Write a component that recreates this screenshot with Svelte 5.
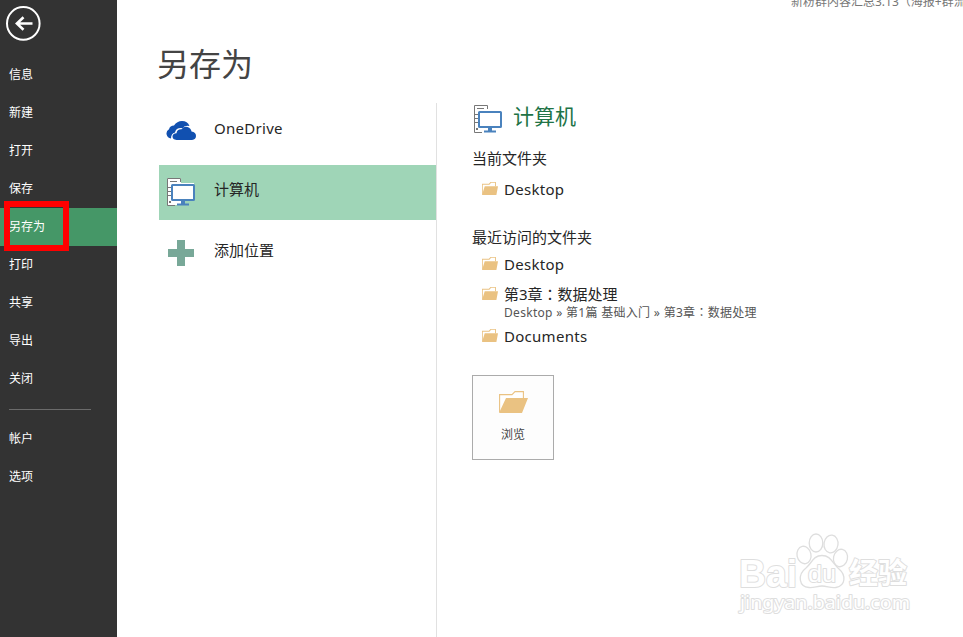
<script>
  const mainNav = ['信息', '新建', '打开', '保存', '另存为', '打印', '共享', '导出', '关闭'];
  const footNav = ['帐户', '选项'];
  const active = '另存为';
  const recent = [
    { name: 'Desktop' },
    { name: '第3章：数据处理', path: 'Desktop » 第1篇 基础入门 » 第3章：数据处理' },
    { name: 'Documents' }
  ];
</script>

{#snippet computer()}
  <svg class="pc" width="30" height="30" viewBox="0 0 30 30" fill="none">
    <path d="M1 1h14v27H1z" fill="#fff" />
    <path d="M14.5 5V1.5H1.5V28.5H9M4 4.5h7M2 10.5h3M2 14.5h3M2 18.5h3" stroke="#777" />
    <path d="M3 24h2v2H3z" fill="#777" />
    <path d="M5 6h23v18H5z" fill="#fff" />
    <rect x="6" y="8" width="22" height="15" rx=".5" fill="#fff" stroke="#4a82bd" stroke-width="2" />
    <path d="M15 24h4v2.500h4v2H11v-2h4z" fill="#4a82bd" />
  </svg>
{/snippet}

{#snippet folder(w, h)}
  <svg class="folder" width={w} height={h} viewBox="0 0 29 22" preserveAspectRatio="none">
    <path d="M.6 21V3.6H13l3-3H24.4V7" fill="#fff" stroke="#eac282" stroke-width={w < 20 ? 1.7 : 1.1} />
    <path d={w < 20 ? 'M5 7h24l-3 15H0z' : 'M7 7h22l-6 15H0z'} fill="#eac282" />
  </svg>
{/snippet}

{#snippet label(text)}
  {#each text.split('：') as part, i}{#if i}<span class="colon">：</span>{/if}{part}{/each}
{/snippet}

<div class="app">
  <aside>
    <button class="back" aria-label="返回">
      <svg width="36" height="36" viewBox="0 0 36 36" fill="none" stroke="#fff">
        <circle cx="18.300" cy="18.400" r="16.300" stroke-width="2" />
        <path d="M27.500 18.500H11.500M18.500 12.200 11.900 18.500l6.600 6.300" stroke-width="2.600" />
      </svg>
    </button>
    <nav>
      {#each mainNav as item}
        <div class="item" class:active={item === active}>
          {item}
          {#if item === active}<span class="mark"></span>{/if}
        </div>
      {/each}
      <hr />
      {#each footNav as item}
        <div class="item">{item}</div>
      {/each}
    </nav>
  </aside>

  <main>
    <div class="doc-title">新粉群内容汇总3.13（海报+群流</div>
    <h1>另存为</h1>
    <div class="columns">
      <section class="places">
        <div class="place">
          <svg width="30" height="19" viewBox="0 0 30 19">
            <path d="M5 17.5A5 5 0 0 1 3 8.200Q4 4.500 8 4.500Q11 0 16 0Q21.500 0 23.500 5Q19 4 16.500 7.200Q10 6.500 9 11.500Q5 12.500 5 17.500Z" fill="#1150b0" />
            <path d="M10.500 19Q6.500 18.500 6.500 15.500Q6.500 12.500 10.500 12.300Q11 8 15.500 8.200Q18 4.900 21.500 6Q25 7 25.500 10.500Q30 11 30 15Q30 18.500 26 19Z" fill="#1150b0" />
          </svg>
          <span class="en">OneDrive</span>
        </div>
        <div class="place selected">
          {@render computer()}
          <span>计算机</span>
        </div>
        <div class="place add">
          <svg width="26" height="26" viewBox="0 0 26 26"><path d="M9 0h8v9h9v8h-9v9H9v-9H0V9h9z" fill="#78a898" /></svg>
          <span>添加位置</span>
        </div>
      </section>

      <section class="details">
        <h2>{@render computer()}<span>计算机</span></h2>
        <h3>当前文件夹</h3>
        <div class="row">{@render folder(16, 13)}<div class="name en">Desktop</div></div>
        <h3 class="second">最近访问的文件夹</h3>
        {#each recent as r}
          <div class="row" class:deep={r.path}>
            {@render folder(16, 13)}
            <div class="name" class:en={!r.path}>
              {@render label(r.name)}
              {#if r.path}<small>{@render label(r.path)}</small>{/if}
            </div>
          </div>
        {/each}
        <button class="browse">{@render folder(29, 22)}<span>浏览</span></button>
      </section>
    </div>
  </main>

  <svg class="watermark" width="190" height="100" viewBox="0 0 190 100">
    <g fill="#fff" stroke="#dedede" stroke-width="1.300">
      <ellipse cx="74" cy="30" rx="7" ry="8.800" transform="rotate(-12 74 30)" />
      <ellipse cx="86" cy="18" rx="6.800" ry="9" />
      <ellipse cx="101" cy="19" rx="7" ry="8.900" transform="rotate(8 101 19)" />
      <ellipse cx="110.500" cy="33" rx="7" ry="8.800" transform="rotate(12 110.500 33)" />
      <path d="M92 30.500C83 30.500 82 38 76 43C67 50 69 62 79 62.500C84 63 87 61 92 61C97 61 101 63.500 106 62.500C116 60.500 116 50 109 44C102 38 101 30.500 92 30.500Z" />
      <g paint-order="stroke" stroke-width="2" stroke-linejoin="round">
        <text x="9" y="61.500" class="latin" font-size="39" textLength="58" lengthAdjust="spacingAndGlyphs">Bai</text>
        <text x="78" y="57" class="du" font-size="24" textLength="28" lengthAdjust="spacingAndGlyphs">du</text>
        <text x="119" y="59" class="cjk" font-size="29" textLength="58">经验</text>
        <text x="10" y="84" class="url" font-size="18.500" textLength="170" lengthAdjust="spacingAndGlyphs">jingyan.baidu.com</text>
      </g>
    </g>
  </svg>
</div>

<style>
  :global(body) { margin: 0; background: #fff; }
  .app {
    position: relative;
    display: flex;
    width: 963px;
    height: 637px;
    overflow: hidden;
    background: #fff;
    color: #262626;
    font-family: "Noto Sans", "Noto Sans CJK SC", sans-serif;
    font-size: 15px;
  }
  svg { display: block; flex: none; }
  button { padding: 0; font: inherit; color: inherit; }
  aside { width: 117px; flex: none; background: #333; color: #fff; font-size: 12px; }
  .back { display: block; height: 56px; padding: 5px 0 0 5px; border: 0; background: none; box-sizing: border-box; }
  .back svg { margin-bottom: 15px; }
  .item { position: relative; height: 38px; line-height: 37px; padding-left: 9px; }
  .active { background: #459767; }
  .mark { position: absolute; left: 4px; top: -7px; width: 53px; height: 38px; border: 6px solid #f00; }
  hr { width: 82px; height: 1px; margin: 11px 0 10px 9px; border: 0; background: #6b6b6b; }
  main { flex: 1; min-width: 0; display: flex; flex-direction: column; }
  .doc-title {
    height: 10px;
    padding-left: 674px;
    line-height: 18px;
    margin-top: -7px;
    margin-bottom: 7px;
    font-size: 12px;
    color: #777;
    white-space: nowrap;
  }
  .colon { font-family: "Noto Sans CJK TC", sans-serif; line-height: 1; }
  h1 { height: 93px; margin: 0 0 0 40px; line-height: 108px; font-size: 32px; font-weight: 400; color: #444; }
  .columns { display: flex; flex: 1; }
  .places { width: 277px; padding: 0 0 0 42px; border-right: 1px solid #e1e1e1; }
  .place { display: flex; align-items: center; height: 55px; padding-left: 7px; }
  .place span { margin: -8px 0 0 18px; }
  .place span.en { margin-top: -6px; }
  .en { letter-spacing: .28px; }
  .place.selected { margin: 7px 0 6px; background: #9fd5b7; }
  .selected .pc { margin-top: -2px; }
  .place.add { padding-left: 9px; }
  .add svg { margin-top: -2px; }
  .place.add span { margin-left: 20px; }
  .details { padding-left: 35px; }
  h2 { display: flex; align-items: center; height: 33px; margin: 0; font-size: 21px; font-weight: 400; color: #217346; }
  h2 .pc { margin: -2px 0 0 1px; }
  h2 span { margin: -10px 0 0 10px; }
  h3 { height: 30px; margin: 7px 0 0; line-height: 30px; font-size: 15px; font-weight: 400; }
  h3.second { margin-top: 19px; height: 26px; }
  .row { display: flex; height: 30px; padding-left: 10px; line-height: 32px; }
  .row .folder { margin-top: 9px; }
  .name { margin-left: 6px; }
  .row.deep { height: 42px; }
  small { display: block; margin-top: -4px; line-height: 12px; font-size: 12px; letter-spacing: .3px; color: #555; white-space: nowrap; }
  .browse {
    display: flex;
    flex-direction: column;
    align-items: center;
    width: 82px;
    height: 85px;
    margin-top: 25px;
    padding-top: 15px;
    box-sizing: border-box;
    border: 1px solid #ababab;
    background: #fdfdfd;
    font-size: 12px;
    color: #444;
  }
  .browse span { margin-top: 13px; line-height: 18px; }
  .watermark { position: absolute; left: 730px; top: 525px; }
  .latin, .du { font-family: "Liberation Sans", sans-serif; font-weight: 700; }
  .du { font-weight: 400; }
  .cjk { font-family: "Noto Sans CJK SC", sans-serif; font-weight: 700; }
  .url { font-family: "Noto Sans", sans-serif; }
</style>
